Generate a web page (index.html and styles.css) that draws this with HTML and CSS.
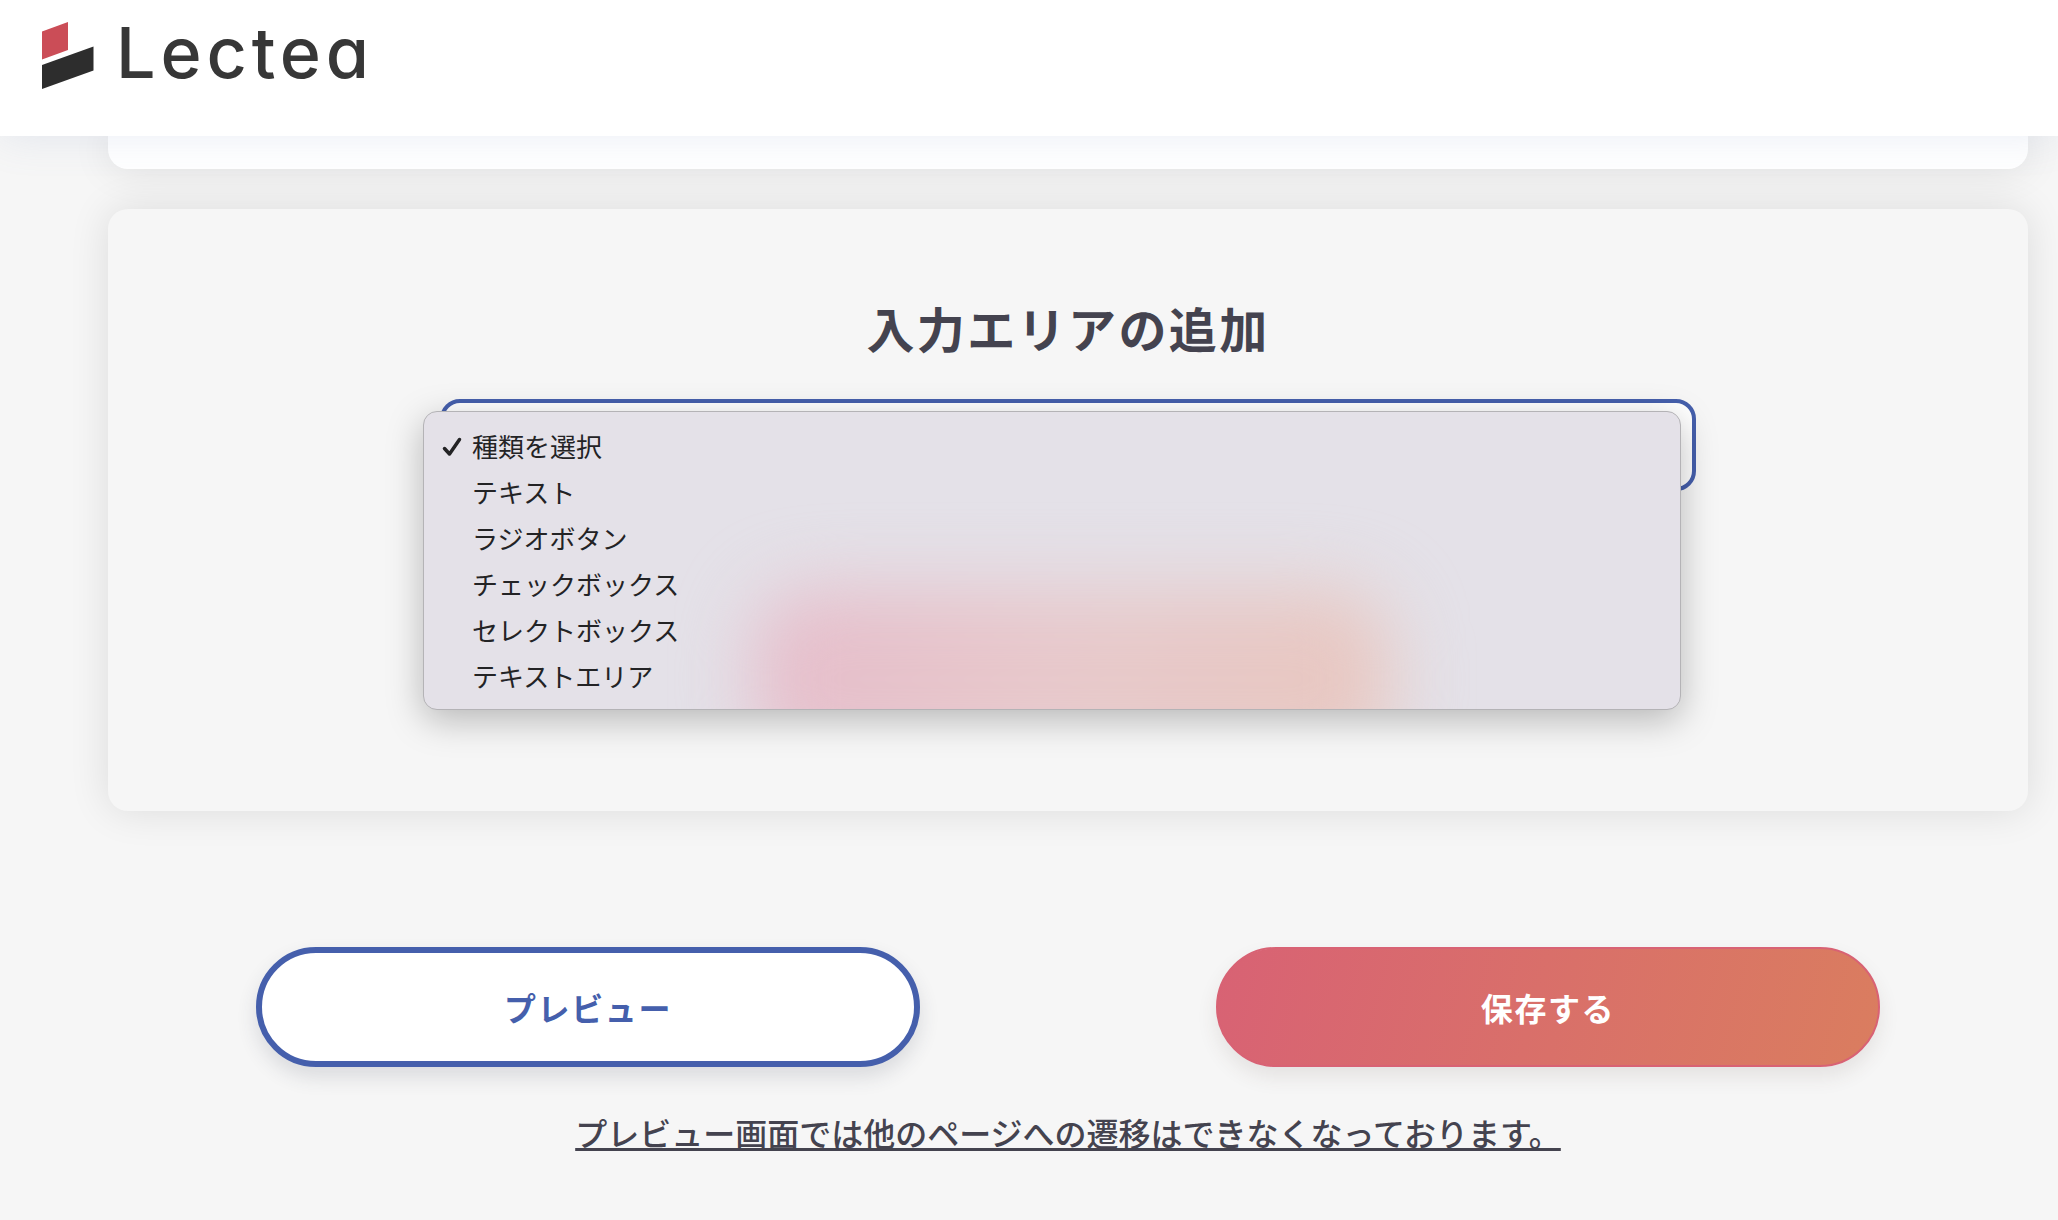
FILE: index.html
```html
<!DOCTYPE html>
<html lang="ja">
<head>
  <meta charset="UTF-8" />
  <meta name="viewport" content="width=device-width, initial-scale=1.0" />
  <title>Lectea</title>
  <link rel="stylesheet" href="styles.css">
</head>
<body>
  <header class="header">
    <a class="logo" href="#">
      <svg class="logo-mark" viewBox="0 0 52 68" aria-hidden="true">
        <path fill="#cb4d57" d="M0 9.5 26 0v28L0 37.500z" />
        <path fill="#2d2d2d" d="M0 43 51.500 24.500V48.500L0 67z" />
      </svg>
      <span class="logo-text">Lectea</span>
    </a>
  </header>
  <main class="main">
    <section class="card card-prev"></section>
    <section class="card card-add">
      <h2 class="title"><label for="area-type">入力エリアの追加</label></h2>
      <div class="picker">
        <select id="area-type" class="picker-select">
          <option value=""></option>
        </select>
        <ul class="menu" role="listbox" aria-label="種類を選択">
          <li class="menu-item" role="option" aria-selected="true">
            <svg class="check" viewBox="0 0 20 20" aria-hidden="true">
              <path d="M2.500 11.500 7.500 17 17.500 2.500" />
            </svg>
            種類を選択
          </li>
          <li class="menu-item" role="option">テキスト</li>
          <li class="menu-item" role="option">ラジオボタン</li>
          <li class="menu-item" role="option">チェックボックス</li>
          <li class="menu-item" role="option">セレクトボックス</li>
          <li class="menu-item" role="option">テキストエリア</li>
        </ul>
      </div>
    </section>
    <div class="actions">
      <button type="button" class="btn btn-preview">プレビュー</button>
      <button type="submit" class="btn btn-save">保存する</button>
    </div>
    <p class="note">プレビュー画面では他のページへの遷移はできなくなっております。</p>
  </main>
</body>
</html>
```
FILE: styles.css
```css
* { box-sizing: border-box; }
body {
  margin: 0;
  font-family: "Noto Sans CJK JP", sans-serif;
  color: #44434f;
  background: #f6f6f6;
}

.header {
  position: sticky;
  top: 0;
  z-index: 10;
  height: 136px;
  padding: 22px 42px;
  background: #fff;
  box-shadow: 0 0 40px rgba(120,145,190,0.16);
}
.logo {
  display: inline-flex;
  gap: 22px;
  color: #373737;
  text-decoration: none;
}
.logo-mark { width: 52px; height: 68px; }
.logo-text {
  font-family: Inter, sans-serif;
  font-size: 70px;
  font-weight: 500;
  line-height: 62px;
  letter-spacing: 0.07em;
  font-feature-settings: "cv11";
}

.main { padding: 0 30px 64px 108px; }
.card {
  border-radius: 20px;
  box-shadow: 0 0 40px rgba(0,0,0,0.11);
}
.card-prev {
  padding-top: 33px;
  border-top-left-radius: 0;
  border-top-right-radius: 0;
  background: #fff;
}
.card-add {
  margin-top: 40px;
  padding: 82px 40px 320px;
  background: #f6f6f6;
}
.title {
  margin: 0 0 36px;
  font-size: 48px;
  line-height: 72px;
  letter-spacing: 0.05em;
  text-align: center;
}

.picker {
  position: relative;
  max-width: 1256px;
  margin: 0 auto;
}
.picker-select {
  display: block;
  width: 100%;
  height: 92px;
  border: 4px solid #455fac;
  border-radius: 20px;
  background: #fff;
  appearance: none;
}
.menu {
  position: absolute;
  top: 12px;
  left: -17px;
  right: 15px;
  margin: 0;
  padding: 10px 12px 11px 18px;
  overflow: hidden;
  list-style: none;
  background: #e4e1e8;
  border: 1px solid #b4b3b6;
  border-radius: 14px;
  box-shadow: 0 10px 36px rgba(0,0,0,0.26);
}
.menu::before {
  content: "";
  position: absolute;
  left: 330px;
  bottom: -60px;
  width: 636px;
  height: 180px;
  border-radius: 60px;
  background: linear-gradient(105deg, #e6bccb, #e7c9cb 50%, #e8c7bf);
  filter: blur(36px);
}
.menu-item {
  position: relative;
  display: flex;
  align-items: center;
  height: 46px;
  padding-left: 30px;
  font-size: 26px;
  color: #232325;
}
.check {
  position: absolute;
  top: 15px;
  left: 0;
  width: 20px;
  height: 20px;
  fill: none;
  stroke: #232325;
  stroke-width: 3.5;
  stroke-linecap: round;
  stroke-linejoin: round;
}

.actions {
  display: grid;
  grid-template-columns: 1fr 1fr;
  justify-items: center;
  margin-top: 136px;
}
.btn {
  width: 100%;
  max-width: 664px;
  height: 120px;
  border-radius: 60px;
  font-family: inherit;
  font-size: 32px;
  font-weight: bold;
  letter-spacing: 0.05em;
  cursor: pointer;
}
.btn-preview {
  color: #455fac;
  background: #fff;
  border: 6px solid #455fac;
  box-shadow: 0 10px 20px rgba(50,60,80,0.14);
}
.btn-save {
  color: #fff;
  background: linear-gradient(105deg, #d86274, #da7d5f);
  border: 2px solid #d86274;
  box-shadow: 0 10px 20px rgba(80,60,50,0.1);
}
.note {
  margin: 42px 0 0;
  font-size: 32px;
  font-weight: 500;
  line-height: 46px;
  text-align: center;
  text-decoration: underline;
  text-decoration-thickness: 3px;
  text-decoration-skip-ink: none;
}
```
